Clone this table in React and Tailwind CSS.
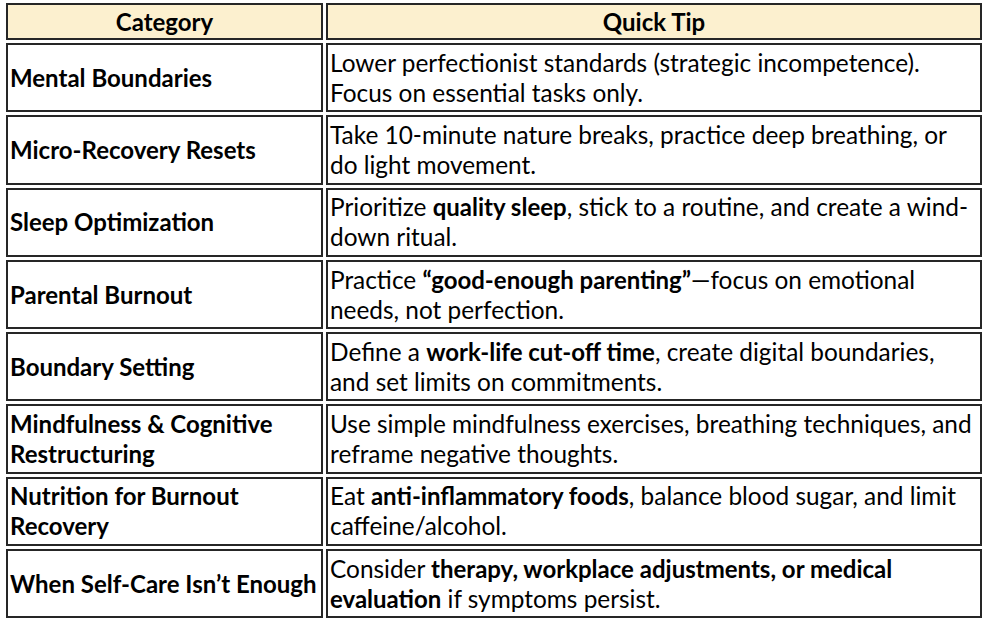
const rows = [
  {
    cat: ['Mental Boundaries'],
    tip: [
      ['Lower perfectionist standards (strategic incompetence).'],
      ['Focus on essential tasks only.'],
    ],
  },
  {
    cat: ['Micro-Recovery Resets'],
    tip: [
      ['Take 10-minute nature breaks, practice deep breathing, or'],
      ['do light movement.'],
    ],
  },
  {
    cat: ['Sleep Optimization'],
    tip: [
      ['Prioritize ', { b: 'quality sleep' }, ', stick to a routine, and create a wind-'],
      ['down ritual.'],
    ],
  },
  {
    cat: ['Parental Burnout'],
    tip: [
      ['Practice ', { b: '\u201cgood-enough parenting\u201d' }, '\u2014focus on emotional'],
      ['needs, not perfection.'],
    ],
  },
  {
    cat: ['Boundary Setting'],
    tip: [
      ['Define a ', { b: 'work-life cut-off time' }, ', create digital boundaries,'],
      ['and set limits on commitments.'],
    ],
  },
  {
    cat: ['Mindfulness & Cognitive', 'Restructuring'],
    tip: [
      ['Use simple mindfulness exercises, breathing techniques, and'],
      ['reframe negative thoughts.'],
    ],
  },
  {
    cat: ['Nutrition for Burnout', 'Recovery'],
    tip: [
      ['Eat ', { b: 'anti-inflammatory foods' }, ', balance blood sugar, and limit'],
      ['caffeine/alcohol.'],
    ],
  },
  {
    cat: ['When Self-Care Isn\u2019t Enough'],
    tip: [
      ['Consider ', { b: 'therapy, workplace adjustments, or medical' }],
      [{ b: 'evaluation' }, ' if symptoms persist.'],
    ],
  },
];

function Line({ parts }) {
  return (
    <div className="whitespace-nowrap">
      {parts.map((p, i) =>
        typeof p === 'string' ? (
          <span key={i}>{p}</span>
        ) : (
          <b key={i} className="font-bold text-[24px]">{p.b}</b>
        )
      )}
    </div>
  );
}

export default function App() {
  return (
    <div className="min-h-screen bg-white pl-[6px] pt-[3px] font-['Lato',sans-serif] text-[24.4px] leading-[30px] text-black">
      <div className="grid grid-cols-[317px_656px] gap-[3px]">
        {/* header */}
        <div className="h-[37px] border-2 border-[#262626] bg-[#fcf0cf] flex items-center justify-center font-bold text-[24px]">
          Category
        </div>
        <div className="h-[37px] border-2 border-[#262626] bg-[#fcf0cf] flex items-center justify-center font-bold text-[24px]">
          Quick Tip
        </div>

        {rows.map((r, i) => (
          <div key={i} className="contents">
            <div className="h-[69.3px] border-2 border-[#262626] flex flex-col justify-center pl-[2px] font-bold text-[24px]">
              {r.cat.map((c, j) => (
                <div key={j} className="whitespace-nowrap">{c}</div>
              ))}
            </div>
            <div className="h-[69.3px] border-2 border-[#262626] flex flex-col justify-center pl-[2px]">
              {r.tip.map((l, j) => (
                <Line key={j} parts={l} />
              ))}
            </div>
          </div>
        ))}
      </div>
    </div>
  );
}
